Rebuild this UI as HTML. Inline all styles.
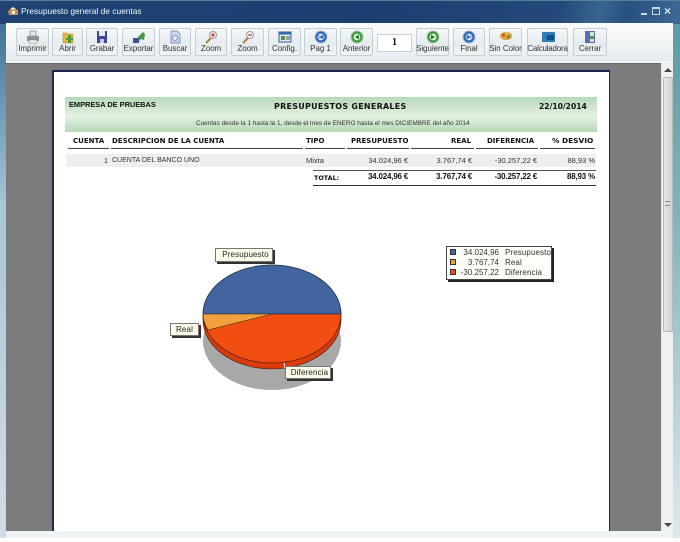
<!DOCTYPE html>
<html><head><meta charset="utf-8"><style>
html,body{margin:0;padding:0;background:#fff}
body{width:680px;height:542px;position:relative;overflow:hidden;background:#fff;font-family:"Liberation Sans",sans-serif;color:#222;filter:blur(.3px)}
div{position:absolute;box-sizing:border-box}
.b{top:28px;height:28px;border:1px solid #c3ced6;border-radius:2px;background:linear-gradient(#f5f7f8,#e6ebee 55%,#f0f3f4);font-size:8px;text-align:center;color:#333;line-height:10px}
.b span{position:absolute;left:-3px;right:-3px;top:15px;text-align:center;letter-spacing:-.05px}
.b svg{position:absolute;left:50%;margin-left:-7px;top:1px}
.h{font-family:"DejaVu Sans",sans-serif;font-weight:bold;font-size:7px;line-height:10px;color:#111;white-space:nowrap}
.l{height:1px;background:#444}
.t{font-size:7.5px;line-height:10px;color:#333;white-space:nowrap}
.r{text-align:right}
.tip{background:#fdfce8;border:1px solid #777;box-shadow:2px 2px 0 #333;font-size:8px;line-height:12px;letter-spacing:.15px;text-align:center;color:#222;white-space:nowrap}
</style></head><body>
<div style="left:0;top:24px;width:6px;height:514px;background:linear-gradient(#3f7396,#a9c5d6 35%,#d0dde6);"></div>
<div style="left:673px;top:24px;width:7px;height:514px;background:linear-gradient(#5f9aa4,#7fb2b8 35%,#dfe9ec)"></div>
<div style="left:0;top:0;width:680px;height:24px;background:linear-gradient(102deg,#1f4474,#1b3f70 55%,#23497a 82%,#3a6590 88%,#27507f 92%,#3f6a94);border-top:1px solid #5d7da0"></div>
<svg style="position:absolute;left:7px;top:6px" width="12" height="11"><path d="M1 5L6 2l5 2v5H2z" fill="#c98d50"/><path d="M3 3l3-2 3 2-3 1z" fill="#f4e3c6"/><rect x="5" y="5" width="3" height="3" fill="#fff"/></svg>
<div style="left:21px;top:5px;font-size:8.4px;line-height:13px;color:#f2f6fa;white-space:nowrap">Presupuesto general de cuentas</div>
<div style="left:641px;top:13px;width:6px;height:2px;background:#c8d6e2"></div>
<div style="left:652px;top:7px;width:8px;height:8px;border:1px solid #c8d6e2;border-top-width:2px"></div>
<div style="left:664px;top:3px;font-size:12px;font-weight:bold;line-height:16px;color:#d8e2ea">×</div>

<div style="left:6px;top:23px;width:667px;height:38px;background:linear-gradient(#fbfcfc,#eef2f4 70%,#e4eaee)"></div>
<div style="left:6px;top:61px;width:667px;height:477px;background:#eef3f5"></div>

<div class="b" style="left:16px;width:33px"><svg width="14" height="14"><rect x="4" y="1" width="6" height="5" fill="#dfe8f0" stroke="#6b86a8" stroke-width=".7"/><path d="M1 6h12v5H1z" fill="#8c9298"/><rect x="3" y="10" width="8" height="3" fill="#f4f4f4" stroke="#777" stroke-width=".5"/></svg><span>Imprimir</span></div>
<div class="b" style="left:52px;width:31px"><svg width="14" height="14"><path d="M2 3h4l1 1h5v9H2z" fill="#e2b93c" stroke="#a7842a" stroke-width=".5"/><path d="M7 5h3v3h2v2h-2v3H7v-3H5V8h2z" fill="#4d9a3f"/></svg><span>Abrir</span></div>
<div class="b" style="left:86px;width:32px"><svg width="14" height="14"><path d="M2 1h10v12H2z" fill="#3c4796"/><rect x="4" y="1" width="6" height="5" fill="#e6e8f4"/><rect x="5" y="9" width="4" height="4" fill="#c8cce0"/></svg><span>Grabar</span></div>
<div class="b" style="left:122px;width:33px"><svg width="14" height="14"><path d="M1 8h6v5H1z" fill="#3a52a0"/><path d="M6 7l5-5 2 2-1 6-3-1-2 2z" fill="#3e9a45"/></svg><span>Exportar</span></div>
<div class="b" style="left:159px;width:32px"><svg width="14" height="14"><path d="M3 1h6l3 3v9H3z" fill="#c9d8ee" stroke="#5f7fae" stroke-width=".7"/><circle cx="7" cy="8" r="2.4" fill="#eef3fa" stroke="#5f7fae" stroke-width=".8"/></svg><span>Buscar</span></div>
<div class="b" style="left:195px;width:32px"><svg width="14" height="14"><path d="M2 13l5-5" stroke="#b58238" stroke-width="2"/><circle cx="9" cy="5" r="3.5" fill="#f4f4f4" stroke="#999"/><path d="M7 5h4M9 3v4" stroke="#c22" stroke-width="1.1"/></svg><span>Zoom</span></div>
<div class="b" style="left:231px;width:33px"><svg width="14" height="14"><path d="M2 13l5-5" stroke="#b58238" stroke-width="2"/><circle cx="9" cy="5" r="3.5" fill="#f4f4f4" stroke="#999"/><path d="M7 5h4" stroke="#c22" stroke-width="1.1"/></svg><span>Zoom</span></div>
<div class="b" style="left:268px;width:33px"><svg width="14" height="14"><rect x="1" y="2" width="12" height="10" fill="#dce8f4" stroke="#2f5f96"/><rect x="1" y="2" width="12" height="2.5" fill="#2f6ba8"/><rect x="3" y="6" width="4" height="4" fill="#5a8a50"/><path d="M8 7h4M8 9h4" stroke="#555"/></svg><span>Config.</span></div>
<div class="b" style="left:304px;width:33px"><svg width="14" height="14"><circle cx="7" cy="7" r="6" fill="#2c66b4" stroke="#a7bcd6"/><circle cx="7" cy="7" r="3.4" fill="#dfe9f5"/><path d="M9 5L6 7l3 2zM5 5v4" fill="#2c66b4" stroke="#2c66b4" stroke-width=".6"/></svg><span>Pag 1</span></div>
<div class="b" style="left:340px;width:33px"><svg width="14" height="14"><circle cx="7" cy="7" r="6" fill="#3a9a3c" stroke="#a9c8a4"/><circle cx="7" cy="7" r="3.4" fill="#e4f2e0"/><path d="M9 4.500L5 7l4 2.500z" fill="#2a7a2c"/></svg><span>Anterior</span></div>
<div style="left:377px;top:34px;width:35px;height:18px;background:#fff;border:1px solid #c3ced6;font:bold 10px/16px 'Liberation Serif',serif;text-align:center;color:#111">1</div>
<div class="b" style="left:416px;width:33px"><svg width="14" height="14"><circle cx="7" cy="7" r="6" fill="#3a9a3c" stroke="#a9c8a4"/><circle cx="7" cy="7" r="3.4" fill="#e4f2e0"/><path d="M5 4.500L9 7l-4 2.500z" fill="#2a7a2c"/></svg><span>Siguiente</span></div>
<div class="b" style="left:453px;width:32px"><svg width="14" height="14"><circle cx="7" cy="7" r="6" fill="#2c66b4" stroke="#a7bcd6"/><circle cx="7" cy="7" r="3.4" fill="#dfe9f5"/><path d="M5 5l3 2-3 2zM9 5v4" fill="#2c66b4" stroke="#2c66b4" stroke-width=".6"/></svg><span>Final</span></div>
<div class="b" style="left:489px;width:33px"><svg width="14" height="14"><ellipse cx="7" cy="6" rx="6" ry="4" fill="#d8a038"/><circle cx="4.500" cy="5" r="1.300" fill="#c8442c"/><circle cx="9.500" cy="7" r="1.500" fill="#6a8a3c"/><circle cx="7.500" cy="3.500" r="1.200" fill="#f0d050"/></svg><span>Sin Color</span></div>
<div class="b" style="left:527px;width:41px"><svg width="14" height="14" style="margin-left:-6px"><rect x="0" y="2" width="13" height="10" fill="#2f7fb4"/><rect x="5" y="5" width="7" height="5" fill="#0f4f86"/></svg><span style="letter-spacing:-.2px">Calculadora</span></div>
<div class="b" style="left:573px;width:34px"><svg width="14" height="14"><rect x="2" y="1" width="10" height="12" fill="#5a6ab4"/><rect x="7" y="2" width="4" height="10" fill="#cfe6d0"/><rect x="7" y="6" width="4" height="3" fill="#4c9a50"/></svg><span>Cerrar</span></div>

<div style="left:6px;top:63px;width:655px;height:468px;background:#7b7b7b;border-top:1px solid #6a6a6a"></div>
<div style="left:52px;top:70px;width:558px;height:461px;background:#fff;border:1px solid #1c2450;border-width:2px 1px 0 2px"></div>

<div style="left:661px;top:63px;width:12px;height:468px;background:#eef1f2;border-left:1px solid #dfe4e6"></div>
<div style="left:663px;top:77px;width:10px;height:255px;background:linear-gradient(90deg,#e4e6e8,#cfd2d4);border:1px solid #b5babd;border-radius:2px"></div>
<div style="left:665px;top:201px;width:5px;height:5px;border-top:1px solid #888;border-bottom:1px solid #888"></div>
<svg style="position:absolute;left:664px;top:68px" width="8" height="5"><path d="M0 4L4 0l4 4z" fill="#444"/></svg>
<svg style="position:absolute;left:664px;top:523px" width="8" height="5"><path d="M0 0l4 4 4-4z" fill="#444"/></svg>

<div style="left:65px;top:97px;width:532px;height:35px;background:linear-gradient(#b7d9b8,#e4f1e3 55%,#b5d8b6)"></div>
<div class="h" style="left:69px;top:100px;font-family:'Liberation Sans',sans-serif;font-size:7.4px">EMPRESA DE PRUEBAS</div>
<div class="h" style="left:274px;top:102px;font-size:8px;letter-spacing:.25px">PRESUPUESTOS GENERALES</div>
<div class="h" style="left:539px;top:102px;font-size:7.6px">22/10/2014</div>
<div class="t" style="left:196px;top:119px;font-size:6.4px">Cuentas desde la 1 hasta la 1, desde el mes de ENERO hasta el mes DICIEMBRE del año 2014</div>

<div class="h" style="left:73px;top:136px">CUENTA</div>
<div class="h" style="left:112px;top:136px">DESCRIPCION DE LA CUENTA</div>
<div class="h" style="left:306px;top:136px">TIPO</div>
<div class="h" style="left:351px;top:136px">PRESUPUESTO</div>
<div class="h" style="left:451px;top:136px">REAL</div>
<div class="h" style="left:487px;top:136px">DIFERENCIA</div>
<div class="h" style="left:552px;top:136px;font-size:7.4px">% DESVIO</div>
<div class="l" style="left:68px;top:148px;width:41px"></div>
<div class="l" style="left:111px;top:148px;width:192px"></div>
<div class="l" style="left:305px;top:148px;width:40px"></div>
<div class="l" style="left:347px;top:148px;width:62px"></div>
<div class="l" style="left:411px;top:148px;width:63px"></div>
<div class="l" style="left:476px;top:148px;width:62px"></div>
<div class="l" style="left:540px;top:148px;width:55px"></div>

<div style="left:66px;top:154px;width:530px;height:13px;background:#efefef"></div>
<div class="t r" style="left:90px;top:156px;width:18px">1</div>
<div class="t" style="left:112px;top:156px;font-size:7px">CUENTA DEL BANCO UNO</div>
<div class="t" style="left:306px;top:156px">Mixta</div>
<div class="t r" style="left:340px;top:156px;width:68px">34.024,96 €</div>
<div class="t r" style="left:410px;top:156px;width:62px">3.767,74 €</div>
<div class="t r" style="left:470px;top:156px;width:67px">-30.257,22 €</div>
<div class="t r" style="left:540px;top:156px;width:55px">88,93 %</div>

<div style="left:313px;top:170px;width:283px;height:1px;background:#555"></div>
<div style="left:313px;top:185px;width:283px;height:1px;background:#333"></div>
<div class="h" style="left:314px;top:173px;font-size:6.4px">TOTAL:</div>
<div class="h r" style="left:340px;top:172px;width:68px;font-family:'Liberation Sans';font-size:8px;letter-spacing:-.2px">34.024,96 €</div>
<div class="h r" style="left:410px;top:172px;width:62px;font-family:'Liberation Sans';font-size:8px;letter-spacing:-.2px">3.767,74 €</div>
<div class="h r" style="left:470px;top:172px;width:67px;font-family:'Liberation Sans';font-size:8px;letter-spacing:-.2px">-30.257,22 €</div>
<div class="h r" style="left:540px;top:172px;width:55px;font-family:'Liberation Sans';font-size:8px;letter-spacing:-.2px">88,93 %</div>

<svg style="position:absolute;left:190px;top:255px" width="170" height="145" viewBox="190 255 170 145">
<ellipse cx="272" cy="341" rx="69" ry="49" fill="#a8a8a8"/>
<path d="M203 314v6c0 27 31 49 69 49s69-22 69-49v-6z" fill="#d93c0a" stroke="#3a1a10" stroke-width=".6"/>
<path d="M203 314L203 320C204 323 206 327 208 331L208 330z" fill="#c87d22"/>
<ellipse cx="272" cy="314" rx="69" ry="49" fill="#f34e12" stroke="#3a1a10" stroke-width=".6"/>
<path d="M203 314A69 49 0 0 1 341 314z" fill="#43659f" stroke="#1c2a40" stroke-width=".7"/>
<path d="M272 314L203 314C203 319 205 325 208 330z" fill="#f2a03c" stroke="#3a2a10" stroke-width=".6"/>
<path d="M284 363l1 5" stroke="#eee" stroke-width="1"/>
</svg>
<div class="tip" style="left:215px;top:248px;width:58px;height:14px;padding-left:3px">Presupuesto</div>
<div class="tip" style="left:170px;top:323px;width:29px;height:13px">Real</div>
<div class="tip" style="left:285px;top:366px;width:46px;height:13px;padding-left:3px">Diferencia</div>

<div style="left:446px;top:246px;width:106px;height:34px;background:#fefef8;border:1px solid #444;box-shadow:2px 2px 0 #222"></div>
<div style="left:450px;top:249px;width:6px;height:6px;background:#43659f;border:1px solid #333"></div>
<div style="left:450px;top:259px;width:6px;height:6px;background:#f2a03c;border:1px solid #333"></div>
<div style="left:450px;top:269px;width:6px;height:6px;background:#f34e12;border:1px solid #333"></div>
<div class="t r" style="left:450px;top:248px;width:49px;font-size:8px">34.024,96</div>
<div class="t r" style="left:450px;top:258px;width:49px;font-size:8px">3.767,74</div>
<div class="t r" style="left:450px;top:268px;width:49px;font-size:8px">-30.257,22</div>
<div class="t" style="left:505px;top:248px;font-size:8px;letter-spacing:.1px">Presupuesto</div>
<div class="t" style="left:505px;top:258px;font-size:8px;letter-spacing:.1px">Real</div>
<div class="t" style="left:505px;top:268px;font-size:8px;letter-spacing:.1px">Diferencia</div>
</body></html>
